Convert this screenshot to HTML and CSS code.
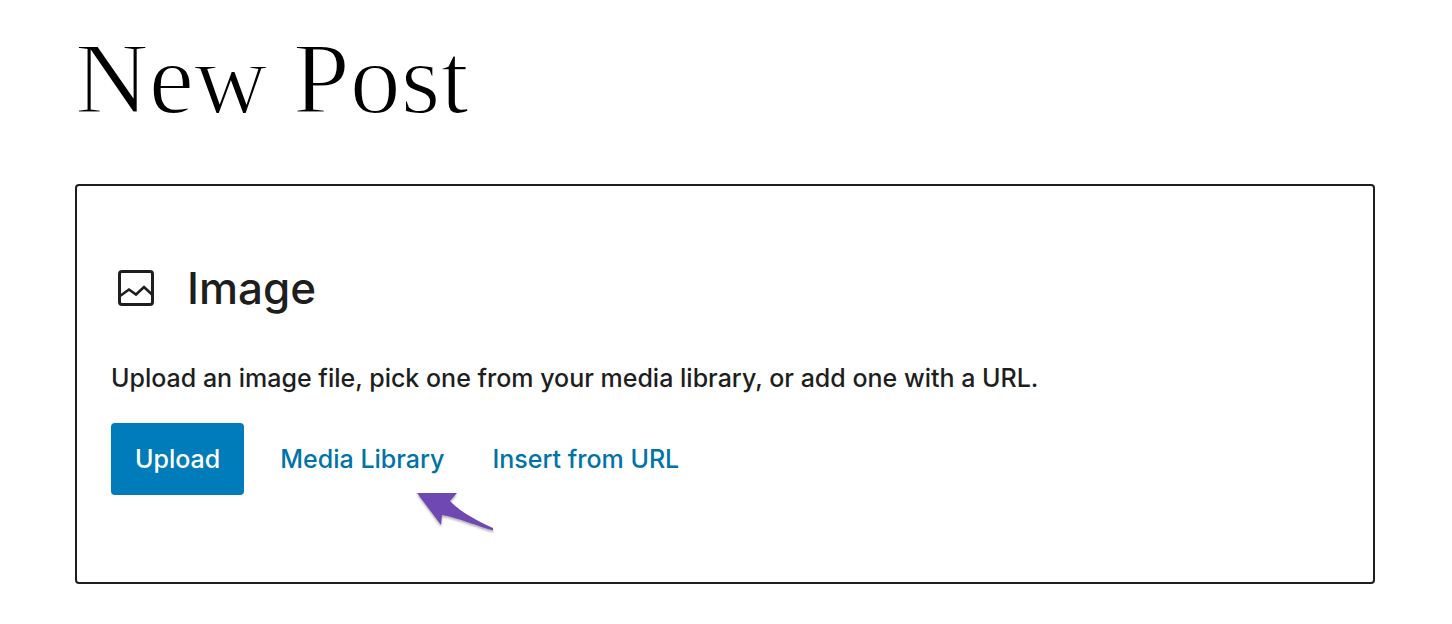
FILE: index.html
```html
<!DOCTYPE html>
<html lang="en">
<head>
<meta charset="utf-8">
<title>New Post</title>
<link rel="stylesheet" href="styles.css">
</head>
<body>
<main class="editor">
  <h1 class="post-title">New Post</h1>
  <section class="placeholder" aria-labelledby="block-name">
    <h2 class="label">
      <svg class="label-icon" viewBox="0 0 48 48" fill="none" stroke="#1e1e1e" stroke-width="3" aria-hidden="true">
        <rect x="8.5" y="7.5" width="33" height="33" rx="2.5"/>
        <path stroke-width="2.600" d="M9 32l9-6.500 7 5 8-7.500 8 7.500"/>
      </svg>
      <span id="block-name">Image</span>
    </h2>
    <p class="instructions">Upload an image file, pick one from your media library, or add one with a URL.</p>
    <div class="actions">
      <button class="button primary" type="button">Upload</button>
      <button class="button" type="button">Media Library</button>
      <button class="button" type="button">Insert from URL</button>
      <svg class="pointer" viewBox="0 0 80 44" aria-hidden="true">
        <path fill="#7048b3" d="M2 2L42 2 35 10C42 18 58 28 78 37V39.500C66 36 40 26 27 24L26 34Z"/>
      </svg>
    </div>
  </section>
</main>
</body>
</html>
```
FILE: styles.css
```css
* {
  box-sizing: border-box;
}

body {
  margin: 0;
  background: #fff;
  color: #1e1e1e;
  font-family: Inter, "Liberation Sans", sans-serif;
}

.editor {
  padding: 24px 77px 40px 75px;
}

.post-title {
  margin: 0 0 50px;
  color: #000;
  font-family: "Liberation Serif", serif;
  font-size: 102px;
  font-weight: 400;
  line-height: 110px;
  -webkit-text-stroke: 2px #fff;
}

.placeholder {
  padding: 68px 34px 87px;
  border: 2px solid #1e1e1e;
  border-radius: 4px;
}

.label {
  display: flex;
  align-items: center;
  gap: 28px;
  margin: 0 0 40px;
  font-size: 44px;
  font-weight: 500;
  line-height: 68px;
}

.label-icon {
  width: 48px;
  height: 48px;
}

.instructions {
  margin: 0 0 29px;
  font-size: 25px;
  font-weight: 500;
  line-height: 32px;
}

.actions {
  position: relative;
  display: flex;
}

.button {
  height: 72px;
  padding: 0 24px;
  border: 0;
  border-radius: 4px;
  background: none;
  color: #0073a8;
  font: inherit;
  font-size: 25px;
  font-weight: 500;
}

.primary {
  margin-right: 12px;
  background: #007cba;
  color: #fff;
}

.pointer {
  position: absolute;
  top: 68px;
  left: 304px;
  width: 80px;
  height: 44px;
  filter: drop-shadow(0 2px 1px rgba(0, 0, 0, 0.3));
}
```
